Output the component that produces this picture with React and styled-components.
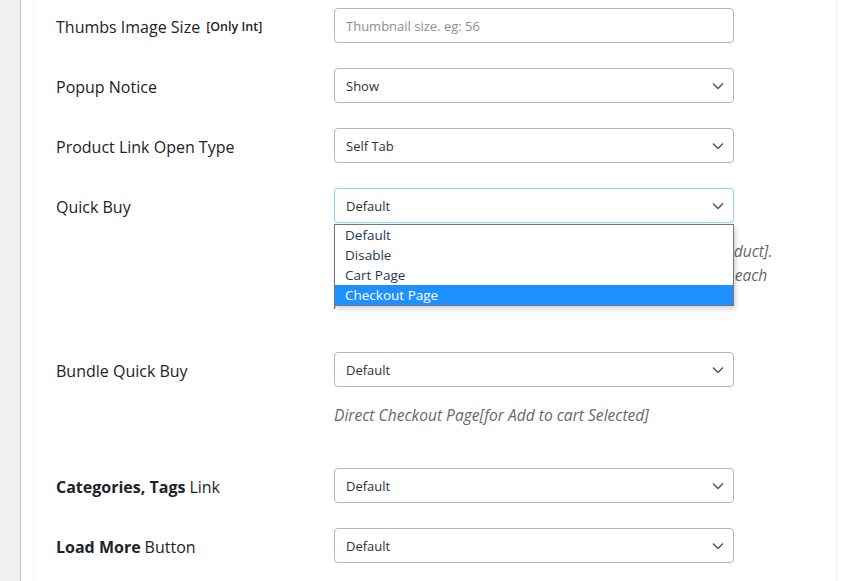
import React from "react";
import styled, { createGlobalStyle } from "styled-components";

const Global = createGlobalStyle`
  html, body { margin: 0; padding: 0; background: #f0f0f1; }
  body { font-family: "Open Sans", "Noto Sans", sans-serif; color: #1d2327; }
  * { box-sizing: border-box; }
`;

const Page = styled.div`
  display: flex;
  width: 859px;
  height: 581px;
  overflow: hidden;
`;

const Gutter = styled.div`
  width: 21px;
  flex: none;
  background: #f0f0f1;
  border-right: 1px solid #c3c4c7;
`;

const Wrap = styled.div`
  flex: 1;
  background: #fff;
  padding: 0 22px 0 12px;
`;

const Panel = styled.div`
  height: 100%;
  border-left: 1px solid #f0f0f1;
  border-right: 1px solid #f0f0f1;
  padding: 8px 0 0 22px;
  display: flex;
  flex-direction: column;
  gap: 25px;
`;

const Row = styled.div`
  display: grid;
  grid-template-columns: 278px 1fr;
  align-items: start;
`;

const Label = styled.div`
  height: 35px;
  display: flex;
  align-items: center;
  gap: 6px;
  font-size: 16px;
  line-height: 20px;
  color: #1d2327;
  padding-top: 2px;
  white-space: nowrap;
`;

const Small = styled.span`
  font-size: 12.5px;
  font-weight: 600;
  padding-top: 1px;
`;

const Strong = styled.b`
  font-weight: 700;
  margin-right: 4px;
`;

const Field = styled.div`
  position: relative;
  display: flex;
  flex-direction: column;
`;

const Input = styled.input`
  width: 400px;
  height: 35px;
  border: 1px solid #b4b6b9;
  border-radius: 4px;
  padding: 0 11px;
  font-family: inherit;
  font-size: 13px;
  color: #2c3338;
  background: #fff;
  outline: none;
  &::placeholder { color: #8c8f94; }
`;

const SelectBox = styled.div`
  width: 400px;
  height: 35px;
  border: 1px solid ${(p) => (p.$focus ? "#9ad4ea" : "#b4b6b9")};
  box-shadow: ${(p) => (p.$focus ? "0 0 2px rgba(120,190,220,0.35)" : "none")};
  border-radius: 4px;
  padding: 0 9px 0 11px;
  display: flex;
  align-items: center;
  justify-content: space-between;
  font-size: 13px;
  color: #2c3338;
  background: #fff;
`;

const Description = styled.p`
  margin: 16px 0 16px;
  font-size: 15.6px;
  line-height: 24px;
  font-style: italic;
  color: #646970;
  white-space: nowrap;
`;

const Menu = styled.ul`
  position: absolute;
  top: 36px;
  left: 0;
  width: 400px;
  margin: 0;
  padding: 0;
  list-style: none;
  background: #fff;
  border: 1px solid #767676;
  box-shadow: 2px 3px 5px rgba(0, 0, 0, 0.18);
  z-index: 5;
`;

const Option = styled.li`
  height: 20px;
  line-height: 20px;
  padding-left: 10px;
  font-size: 13.5px;
  color: ${(p) => (p.$active ? "#fff" : "#1d3a52")};
  background: ${(p) => (p.$active ? "#1e90ff" : "transparent")};
`;

const Chevron = () => (
  <svg width="12" height="8" viewBox="0 0 12 8" fill="none">
    <path d="M1 1.5 L6 6.5 L11 1.5" stroke="#50575e" strokeWidth="1.5" />
  </svg>
);

const Select = ({ value, focus }) => (
  <SelectBox $focus={focus}>
    <span>{value}</span>
    <Chevron />
  </SelectBox>
);

export default function App() {
  return (
    <>
      <Global />
      <Page>
        <Gutter />
        <Wrap>
          <Panel>
            <Row>
              <Label>
                Thumbs Image Size <Small>[Only Int]</Small>
              </Label>
              <Field>
                <Input placeholder="Thumbnail size. eg: 56" />
              </Field>
            </Row>
            <Row>
              <Label>Popup Notice</Label>
              <Field>
                <Select value="Show" />
              </Field>
            </Row>
            <Row>
              <Label>Product Link Open Type</Label>
              <Field>
                <Select value="Self Tab" />
              </Field>
            </Row>
            <Row>
              <Label>Quick Buy</Label>
              <Field>
                <Select value="Default" focus />
                <Menu>
                  <Option>Default</Option>
                  <Option>Disable</Option>
                  <Option>Cart Page</Option>
                  <Option $active>Checkout Page</Option>
                </Menu>
                <Description>
                  Direct Checkout Page[for Add to cart Selected, a Single product].
                  <br />
                  Quick Buy button will be shown on shop archive pages for each
                  <br />
                  product.
                </Description>
              </Field>
            </Row>
            <Row>
              <Label>Bundle Quick Buy</Label>
              <Field>
                <Select value="Default" />
                <Description>Direct Checkout Page[for Add to cart Selected]</Description>
              </Field>
            </Row>
            <Row>
              <Label>
                <span>
                  <Strong>Categories, Tags</Strong>Link
                </span>
              </Label>
              <Field>
                <Select value="Default" />
              </Field>
            </Row>
            <Row>
              <Label>
                <span>
                  <Strong>Load More</Strong>Button
                </span>
              </Label>
              <Field>
                <Select value="Default" />
              </Field>
            </Row>
          </Panel>
        </Wrap>
      </Page>
    </>
  );
}
